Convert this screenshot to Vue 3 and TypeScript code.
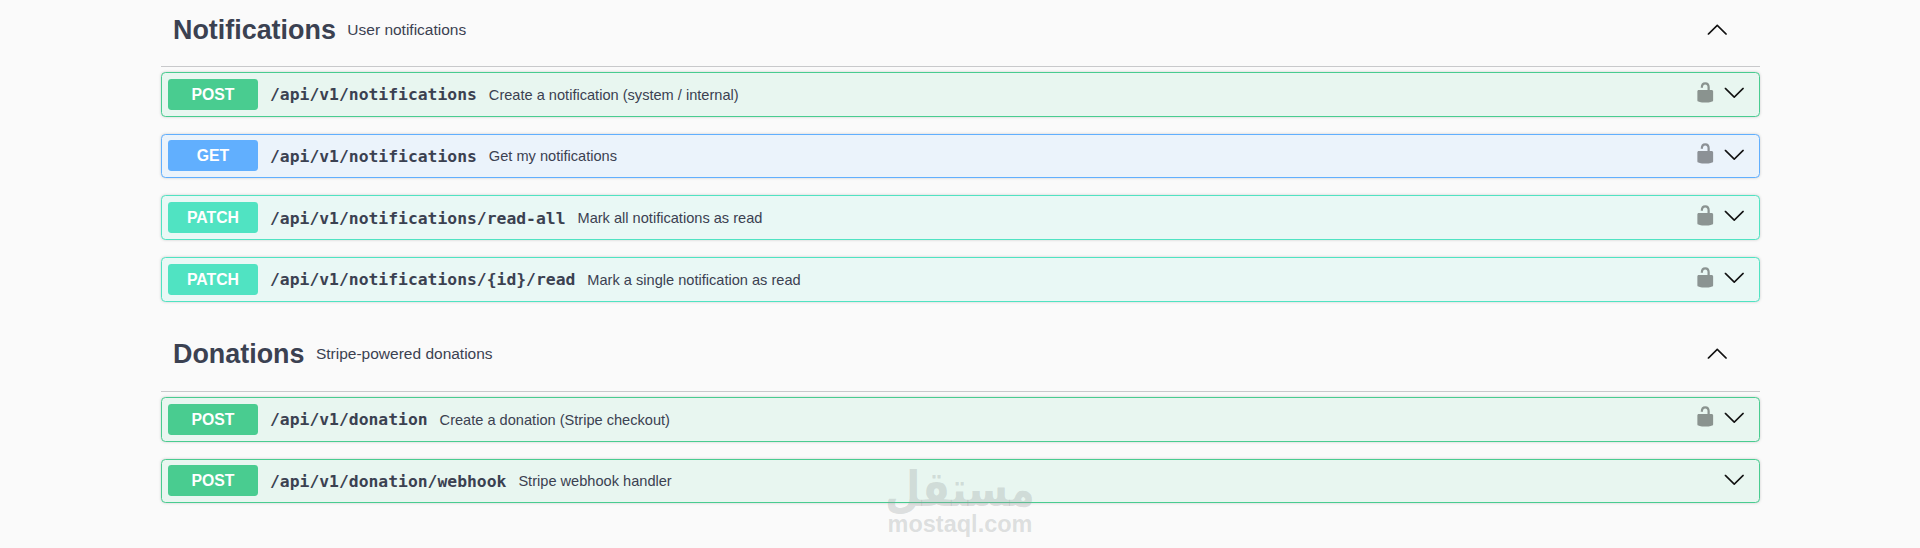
<script setup lang="ts">
interface Op {
  method: 'POST' | 'GET' | 'PATCH'
  path: string
  summary: string
  locked: boolean
}
interface Tag {
  name: string
  description: string
  ops: Op[]
}
const tags: Tag[] = [
  {
    name: 'Notifications',
    description: 'User notifications',
    ops: [
      { method: 'POST', path: '/api/v1/notifications', summary: 'Create a notification (system / internal)', locked: true },
      { method: 'GET', path: '/api/v1/notifications', summary: 'Get my notifications', locked: true },
      { method: 'PATCH', path: '/api/v1/notifications/read-all', summary: 'Mark all notifications as read', locked: true },
      { method: 'PATCH', path: '/api/v1/notifications/{id}/read', summary: 'Mark a single notification as read', locked: true },
    ],
  },
  {
    name: 'Donations',
    description: 'Stripe-powered donations',
    ops: [
      { method: 'POST', path: '/api/v1/donation', summary: 'Create a donation (Stripe checkout)', locked: true },
      { method: 'POST', path: '/api/v1/donation/webhook', summary: 'Stripe webhook handler', locked: false },
    ],
  },
]
const arrow = 'M17.418 6.109c.272-.268.709-.268.979 0s.271.701 0 .969l-7.908 7.83c-.27.268-.707.268-.979 0l-7.908-7.83c-.27-.268-.27-.701 0-.969.271-.268.709-.268.979 0L10 13.25l7.418-7.141z'
const lock = 'M15.8 8H14V5.6C14 2.703 12.665 1 10 1 7.334 1 6 2.703 6 5.6V6h2v-.801C8 3.754 8.797 3 10 3c1.203 0 2 .754 2 2.199V8H4c-.553 0-1 .646-1 1.199V17c0 .549.428 1.139.951 1.307l1.197.387C5.672 18.861 6.55 19 7.1 19h5.8c.549 0 1.428-.139 1.951-.307l1.196-.387c.524-.167.953-.757.953-1.306V9.199C17 8.646 16.352 8 15.8 8z'
</script>

<template>
  <div class="page">
    <section v-for="tag in tags" :key="tag.name" class="tag">
      <header class="tag-head">
        <h3 class="tag-name">{{ tag.name }}</h3>
        <span class="tag-desc">{{ tag.description }}</span>
        <svg class="tag-arrow" viewBox="0 0 20 20"><path :d="arrow" /></svg>
      </header>
      <div class="ops">
        <div v-for="op in tag.ops" :key="op.method + op.path" class="op" :class="op.method.toLowerCase()">
          <span class="method">{{ op.method }}</span>
          <span class="path">{{ op.path }}</span>
          <span class="summary">{{ op.summary }}</span>
          <svg v-if="op.locked" class="lock" viewBox="0 0 20 20"><path :d="lock" /></svg>
          <svg class="op-arrow" viewBox="0 0 20 20"><path :d="arrow" /></svg>
        </div>
      </div>
    </section>
    <div class="watermark">
      <span class="wm-ar" lang="ar" dir="rtl">مستقل</span>
      <span class="wm-en">mostaql.com</span>
    </div>
  </div>
</template>

<style>
html,
body {
  margin: 0;
  background: #fafafa;
}
</style>

<style scoped>
.page {
  position: relative;
  box-sizing: border-box;
  width: 1920px;
  height: 548px;
  padding: 0 160px 0 161px;
  overflow: hidden;
  background: #fafafa;
  color: #3b4151;
  font-family: "Liberation Sans", Arial, sans-serif;
}
.tag {
  margin-bottom: 23.3px;
}
.tag-head {
  display: flex;
  align-items: center;
  box-sizing: border-box;
  height: 67.4px;
  padding: 0 32px 6px 12px;
  border-bottom: 1px solid #c8c9cb;
}
.tag + .tag .tag-head {
  padding-bottom: 8px;
}
.tag-name {
  margin: 0;
  font-size: 26.9px;
  line-height: 1;
  font-weight: 700;
}
.tag-desc {
  margin-left: 11.5px;
  font-size: 15.5px;
}
.tag-arrow {
  width: 22.5px;
  height: 22.5px;
  margin-left: auto;
  transform: rotate(180deg);
  fill: #111;
}
.ops {
  display: flex;
  flex-direction: column;
  gap: 17px;
  padding-top: 4.6px;
}
.op {
  display: flex;
  align-items: center;
  box-sizing: border-box;
  height: 44.67px;
  padding: 0 14px 0 6px;
  border: 1px solid;
  border-radius: 4.5px;
  box-shadow: 0 0 3px rgba(0, 0, 0, 0.19);
}
.op.post {
  background: #e8f6f0;
  border-color: #49cc90;
}
.op.get {
  background: #ebf3fb;
  border-color: #61affe;
}
.op.patch {
  background: #e9f8f5;
  border-color: #50e3c2;
}
.method {
  flex: none;
  width: 90px;
  height: 31px;
  border-radius: 3.4px;
  color: #fff;
  font-size: 15.8px;
  line-height: 31px;
  font-weight: 700;
  text-align: center;
}
.post .method {
  background: #49cc90;
}
.get .method {
  background: #61affe;
}
.patch .method {
  background: #50e3c2;
}
.path {
  margin: 1px 0 0 12px;
  font-family: "DejaVu Sans Mono", monospace;
  font-size: 16.37px;
  font-weight: 700;
}
.summary {
  margin: 1px 0 0 12px;
  font-size: 14.6px;
}
.lock {
  width: 22.5px;
  height: 22.5px;
  margin-left: auto;
  margin-bottom: 5px;
  opacity: 0.4;
}
.op-arrow {
  width: 22.5px;
  height: 22.5px;
  margin-left: 6.5px;
  margin-bottom: 4px;
  fill: #111;
}
.op:not(:has(.lock)) .op-arrow {
  margin-left: auto;
}
.watermark {
  position: absolute;
  left: 888px;
  top: 473px;
  display: flex;
  flex-direction: column;
  align-items: center;
  width: 144px;
  color: rgba(150, 155, 155, 0.3);
  font-weight: 700;
  pointer-events: none;
}
.wm-ar {
  font-family: "DejaVu Sans", sans-serif;
  font-size: 41px;
  line-height: 40px;
  transform: scaleY(1.2);
  transform-origin: bottom;
}
.wm-en {
  font-size: 23.5px;
  line-height: 22px;
}
</style>
